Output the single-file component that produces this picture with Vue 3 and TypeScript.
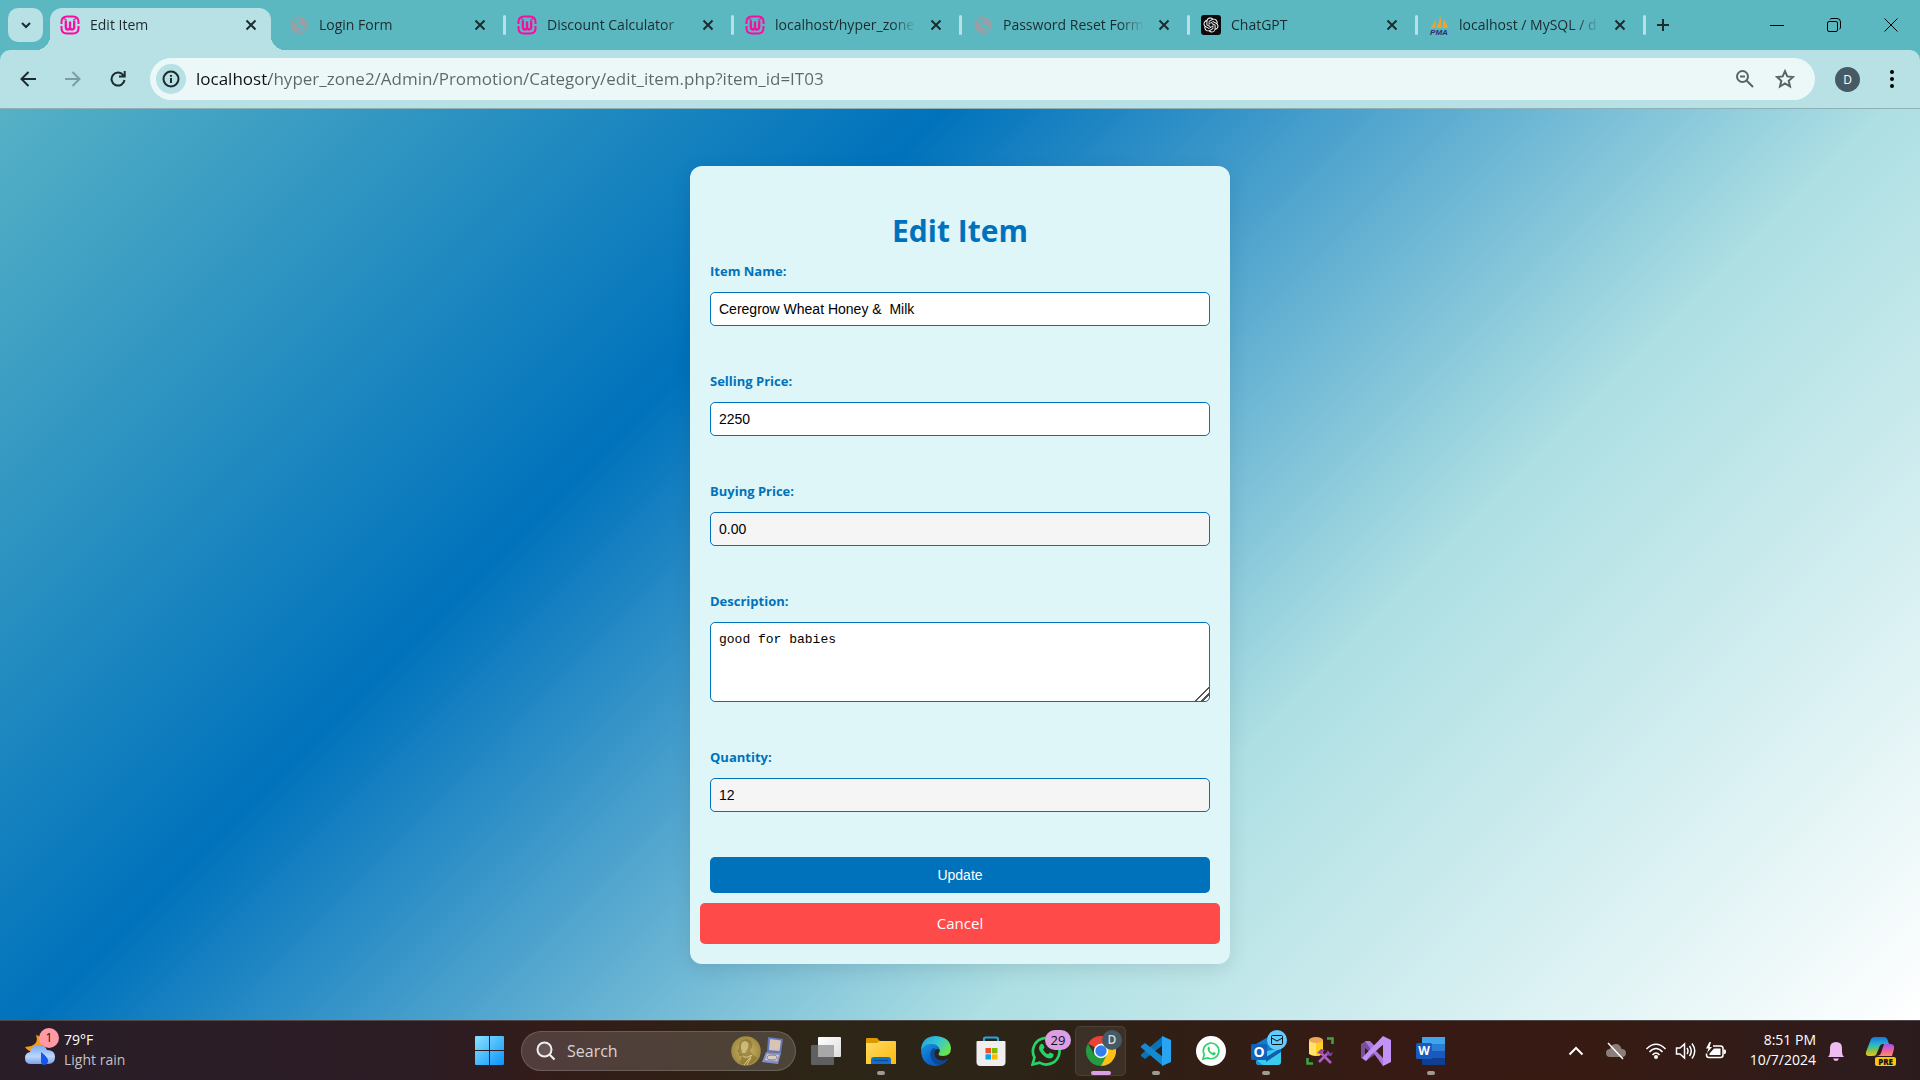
<script setup lang="ts">
import { ref } from 'vue'

interface Tab {
  title: string
  icon: 'wamp' | 'globe' | 'gpt' | 'pma'
}

interface App {
  name: string
  running?: boolean
  active?: boolean
}

const tabs: Tab[] = [
  { title: 'Edit Item', icon: 'wamp' },
  { title: 'Login Form', icon: 'globe' },
  { title: 'Discount Calculator', icon: 'wamp' },
  { title: 'localhost/hyper_zone', icon: 'wamp' },
  { title: 'Password Reset Form', icon: 'globe' },
  { title: 'ChatGPT', icon: 'gpt' },
  { title: 'localhost / MySQL / d', icon: 'pma' },
]

const apps: App[] = [
  { name: 'Task View' },
  { name: 'File Explorer', running: true },
  { name: 'Edge' },
  { name: 'Store' },
  { name: 'WhatsApp' },
  { name: 'Chrome', active: true },
  { name: 'VS Code', running: true },
  { name: 'WhatsApp Web' },
  { name: 'Outlook', running: true },
  { name: 'Database Tools' },
  { name: 'Visual Studio' },
  { name: 'Word', running: true },
]

const url = ref('localhost/hyper_zone2/Admin/Promotion/Category/edit_item.php?item_id=IT03')
const search = ref('')
const item = ref({
  name: 'Ceregrow Wheat Honey &  Milk',
  selling: '2250',
  buying: '0.00',
  description: 'good for babies',
  quantity: '12',
})
</script>

<template>
  <div class="desktop">
    <header class="chrome">
      <div class="strip">
        <button class="tab-search" aria-label="Search tabs">
          <svg width="12" height="12" viewBox="0 0 12 12"><path d="M2 4l4 4 4-4" class="stroke2" /></svg>
        </button>
        <div class="tabs">
          <div v-for="(tab, i) in tabs" :key="i" class="tab" :class="{ active: i === 0 }">
            <svg v-if="tab.icon === 'wamp'" class="fav" viewBox="0 0 20 20">
              <g fill="none" stroke="#f90da0" stroke-width="2">
                <path d="M1.500 9V7Q1.500 1.500 7 1.500H13Q18.500 1.500 18.500 7V9M1.500 11V13Q1.500 18.500 7 18.500H13Q18.500 18.500 18.500 13V11" />
                <path d="M5.800 5.500V12Q5.800 14.500 7.900 14.500T10 12V6.500V12Q10 14.500 12.100 14.500T14.200 12V5.500" stroke-width="2.300" />
                <path d="M4 3.500L6.500 5M16 3.500L13.500 5" stroke-width="1.200" />
              </g>
            </svg>
            <svg v-else-if="tab.icon === 'globe'" class="fav" viewBox="0 0 20 20">
              <circle cx="10" cy="10" r="7.600" fill="none" stroke="#989fa6" stroke-width="2" />
              <path d="M2.500 8H6L9 10.500V12.500H11.500V15L9 18 4 16 2 11ZM10 2.500L15 4 17.500 8.500V11.500H14.500L12.500 9.500H10.500L9 7.500 11 5Z" fill="#989fa6" />
            </svg>
            <svg v-else-if="tab.icon === 'gpt'" class="fav" viewBox="0 0 20 20">
              <rect width="20" height="20" rx="3" fill="#0b0b0b" />
              <path transform="translate(2.500 2.500) scale(.625)" fill="#fff" d="M22.2819 9.8211a5.9847 5.9847 0 0 0-.5157-4.9108 6.0462 6.0462 0 0 0-6.5098-2.9A6.0651 6.0651 0 0 0 4.9807 4.1818a5.9847 5.9847 0 0 0-3.9977 2.9 6.0462 6.0462 0 0 0 .7427 7.0966 5.98 5.98 0 0 0 .511 4.9107 6.051 6.051 0 0 0 6.5146 2.9001A5.9847 5.9847 0 0 0 13.2599 24a6.0557 6.0557 0 0 0 5.7718-4.2058 5.9894 5.9894 0 0 0 3.9977-2.9001 6.0557 6.0557 0 0 0-.7475-7.0729zm-9.022 12.6081a4.4755 4.4755 0 0 1-2.8764-1.0408l.1419-.0804 4.7783-2.7582a.7948.7948 0 0 0 .3927-.6813v-6.7369l2.02 1.1686a.071.071 0 0 1 .038.052v5.5826a4.504 4.504 0 0 1-4.4945 4.4944zm-9.6607-4.1254a4.4708 4.4708 0 0 1-.5346-3.0137l.142.0852 4.783 2.7582a.7712.7712 0 0 0 .7806 0l5.8428-3.3685v2.3324a.0804.0804 0 0 1-.0332.0615L9.74 19.9502a4.4992 4.4992 0 0 1-6.1408-1.6464zM2.3408 7.8956a4.485 4.485 0 0 1 2.3655-1.9728V11.6a.7664.7664 0 0 0 .3879.6765l5.8144 3.3543-2.0201 1.1685a.0757.0757 0 0 1-.071 0l-4.8303-2.7865A4.504 4.504 0 0 1 2.3408 7.872zm16.5963 3.8558L13.1038 8.364 15.1192 7.2a.0757.0757 0 0 1 .071 0l4.8303 2.7913a4.4944 4.4944 0 0 1-.6765 8.1042v-5.6772a.79.79 0 0 0-.407-.667zm2.0107-3.0231l-.142-.0852-4.7735-2.7818a.7759.7759 0 0 0-.7854 0L9.409 9.2297V6.8974a.0662.0662 0 0 1 .0284-.0615l4.8303-2.7866a4.4992 4.4992 0 0 1 6.6802 4.66zM8.3065 12.863l-2.02-1.1638a.0804.0804 0 0 1-.038-.0567V6.0742a4.4992 4.4992 0 0 1 7.3757-3.4537l-.142.0805L8.704 5.459a.7948.7948 0 0 0-.3927.6813zm1.0976-2.3654l2.602-1.4998 2.6069 1.4998v2.9994l-2.5974 1.4997-2.6067-1.4997Z" />
            </svg>
            <svg v-else class="fav" viewBox="0 0 20 20">
              <path d="M1.500 13Q5 9 6.500 4Q7 9 6.500 13ZM7.500 13Q10.500 7 11 0Q13 7 12.500 13ZM13.500 13Q14.500 9 14.500 4Q18 8 19 13Z" fill="#f5a02a" />
              <text x="10" y="19.500" class="pma" text-anchor="middle">PMA</text>
            </svg>
            <span class="title">{{ tab.title }}</span>
            <button class="close" :aria-label="`Close ${tab.title}`">
              <svg width="12" height="12" viewBox="0 0 12 12"><path d="M1.500 1.500l9 9M10.500 1.500l-9 9" class="stroke2" /></svg>
            </button>
          </div>
          <button class="new-tab" aria-label="New tab">
            <svg width="14" height="14" viewBox="0 0 14 14"><path d="M7 1v12M1 7h12" class="stroke2" /></svg>
          </button>
        </div>
        <div class="window-controls">
          <button aria-label="Minimize"><svg width="14" height="14" viewBox="0 0 14 14"><path d="M0 7.500h14" class="stroke1" /></svg></button>
          <button aria-label="Restore">
            <svg width="14" height="14" viewBox="0 0 14 14"><rect x=".5" y="3.500" width="10" height="10" rx="1.500" class="stroke1" /><path d="M3 1.500Q3 .5 5 .5H10Q13.500 .5 13.500 4V9Q13.500 11 12.500 11" class="stroke1" /></svg>
          </button>
          <button aria-label="Close window"><svg width="14" height="14" viewBox="0 0 14 14"><path d="M.5 .5l13 13M13.500 .5l-13 13" class="stroke1" /></svg></button>
        </div>
      </div>

      <nav class="toolbar">
        <button class="nav" aria-label="Back"><svg width="16" height="16" viewBox="0 0 16 16"><path d="M16 8H2M8.500 1L1.500 8l7 7" class="stroke2" /></svg></button>
        <button class="nav dim" aria-label="Forward"><svg width="16" height="16" viewBox="0 0 16 16"><path d="M0 8h14M7.500 1l7 7-7 7" class="stroke2" /></svg></button>
        <button class="nav" aria-label="Reload">
          <svg width="16" height="16" viewBox="0 0 16 16"><path d="M13.500 4.500A6.500 6.500 0 1 0 14.500 9M14.700 0V5.500H9" class="stroke2" /></svg>
        </button>
        <div class="omnibox">
          <button class="site-info" aria-label="View site information">
            <svg width="18" height="18" viewBox="0 0 18 18"><circle cx="9" cy="9" r="7.500" class="stroke2" /><path d="M9 8v5M9 5v1.800" class="stroke2" /></svg>
          </button>
          <input v-model="url" class="url" aria-label="Address" spellcheck="false" />
          <button class="page-action" aria-label="Zoom">
            <svg width="20" height="20" viewBox="0 0 20 20"><circle cx="7.500" cy="7.500" r="5.500" class="stroke2" /><path d="M11.500 11.500L18 18M5 7.500h5" class="stroke2" /></svg>
          </button>
          <button class="page-action" aria-label="Bookmark this tab">
            <svg width="20" height="20" viewBox="0 0 20 20"><path d="M10 2.200L12.300 7.400 18 8 13.700 11.800 15 17.500 10 14.500 5 17.500 6.300 11.800 2 8 7.700 7.400Z" class="stroke2" /></svg>
          </button>
        </div>
        <button class="avatar" aria-label="Profile">D</button>
        <button class="menu" aria-label="Menu">
          <svg width="6" height="20" viewBox="0 0 6 20"><circle cx="3" cy="3" r="2" /><circle cx="3" cy="10" r="2" /><circle cx="3" cy="17" r="2" /></svg>
        </button>
      </nav>
    </header>

    <main class="page">
      <section class="card">
        <form @submit.prevent>
          <h1>Edit Item</h1>
          <div class="field">
            <label for="name">Item Name:</label>
            <input id="name" v-model="item.name" type="text" />
          </div>
          <div class="field">
            <label for="selling">Selling Price:</label>
            <input id="selling" v-model="item.selling" type="text" />
          </div>
          <div class="field">
            <label for="buying">Buying Price:</label>
            <input id="buying" v-model="item.buying" type="text" readonly />
          </div>
          <div class="field">
            <label for="description">Description:</label>
            <textarea id="description" v-model="item.description" spellcheck="false"></textarea>
          </div>
          <div class="field">
            <label for="quantity">Quantity:</label>
            <input id="quantity" v-model="item.quantity" type="text" readonly />
          </div>
          <button type="submit" class="update">Update</button>
        </form>
        <a href="#" class="cancel">Cancel</a>
      </section>
    </main>

    <footer class="taskbar">
      <button class="weather">
        <span class="weather-icon">
          <svg width="32" height="38" viewBox="0 0 32 38">
            <defs><linearGradient id="cloud" x1="0" y1="0" x2="0" y2="1"><stop offset="0" stop-color="#78a7f5" /><stop offset=".6" stop-color="#bcd6fb" /><stop offset="1" stop-color="#7aa3ec" /></linearGradient></defs>
            <path d="M12 7Q16 18 1 19Q5 25 13 23Q20 20 19 13Q17 8 12 7Z" fill="#f39a1e" />
            <path d="M7 36Q1 36 1 30Q1 25 6 24Q8 17 15 17Q21 17 23 22Q31 22 31 29Q31 36 24 36Z" fill="url(#cloud)" />
            <path d="M17 24Q25 30 24 34Q23 37 20 37Q17 37 17 33Z" fill="#1557ed" />
          </svg>
          <span class="badge">1</span>
        </span>
        <span class="weather-text"><span class="temp">79°F</span><span class="cond">Light rain</span></span>
      </button>

      <div class="center">
        <button class="cell" aria-label="Start">
          <svg width="29" height="29" viewBox="0 0 29 29">
            <defs><linearGradient id="win" x1="0" y1="0" x2="1" y2="1"><stop offset="0" stop-color="#8be2ff" /><stop offset="1" stop-color="#0a94fb" /></linearGradient></defs>
            <path d="M0 1Q0 0 1 0H14V14H0ZM15 0H28Q29 0 29 1V14H15ZM0 15H14V29H1Q0 29 0 28ZM15 15H29V28Q29 29 28 29H15Z" fill="url(#win)" />
          </svg>
        </button>
        <label class="search">
          <svg width="20" height="20" viewBox="0 0 20 20"><circle cx="8.500" cy="8.500" r="7" fill="#ffffff20" stroke="#eee" stroke-width="2" /><path d="M13.500 13.500L18.500 18.500" stroke="#eee" stroke-width="2.200" /></svg>
          <input v-model="search" placeholder="Search" aria-label="Search" />
          <svg width="52" height="30" viewBox="0 0 52 30">
            <defs><radialGradient id="coin"><stop offset="0" stop-color="#cdb76a" /><stop offset="1" stop-color="#a08a40" /></radialGradient></defs>
            <circle cx="15" cy="15" r="14.800" fill="url(#coin)" />
            <path d="M9 27L11 20 8 20 8 17 6 15 8 12Q7 4 15 3Q22 3 21 11L19 15 22 19 26 22Q21 29 15 29Z" fill="#6d5b22" opacity=".4" />
            <path d="M10 12Q9 6 14 5Q19 6 17 12L14 17 11 17Z" fill="#e0cf8d" opacity=".7" />
            <path d="M12 20Q16 23 20 19M13 29L21 19M20 22Q17 26 16 29" stroke="#ddcb83" fill="none" />
            <path d="M37 1L52 3 50 17 36 16Z" fill="#6577b8" /><path d="M39 3L50 4.500 48.500 15 38 14Z" fill="#d8c3b8" />
            <path d="M35 16L50 17 47 28 31 26Z" fill="#8190ca" /><path d="M36 18L48 19 46 25 34 24Z" fill="#d9cdc9" /><ellipse cx="41" cy="21.500" rx="5" ry="2.500" fill="none" stroke="#81747b" />
          </svg>
        </label>
        <button v-for="app in apps" :key="app.name" class="cell" :class="{ running: app.running, current: app.active }" :aria-label="app.name">
          <svg v-if="app.name === 'Task View'" class="ico" viewBox="0 0 30 30">
            <defs><linearGradient id="tv" x1="0" y1="0" x2="1" y2="1"><stop offset="0" stop-color="#fff" /><stop offset="1" stop-color="#dedede" /></linearGradient></defs>
            <rect x="7" y="1" width="23" height="20" rx="1" fill="url(#tv)" /><rect y="9" width="23" height="20" rx="1" fill="#5f5f60" /><rect x="7" y="9" width="16" height="12" fill="#a8a8a8" />
          </svg>
          <svg v-else-if="app.name === 'File Explorer'" class="ico" viewBox="0 0 30 30">
            <defs><linearGradient id="fe" x1="0" y1="0" x2="1" y2="1"><stop offset="0" stop-color="#ffdc64" /><stop offset="1" stop-color="#fdb90c" /></linearGradient></defs>
            <path d="M0 3Q0 2 1 2H11L14 5H28V12H0Z" fill="#dc9a00" /><path d="M0 7H11L14 5H29Q30 5 30 6V28H0Z" fill="url(#fe)" />
            <path d="M5 28V24Q5 21 8 21H22Q25 21 25 24V28Z" fill="#0f70cc" /><path d="M8 24.500H22" stroke="#074c91" stroke-width="1.200" />
          </svg>
          <svg v-else-if="app.name === 'Edge'" class="ico" viewBox="0 0 30 30">
            <defs>
              <linearGradient id="e1" x1="0" y1="0" x2="1" y2=".6"><stop offset="0" stop-color="#1f9fe0" /><stop offset=".55" stop-color="#35c6d6" /><stop offset="1" stop-color="#6ae34c" /></linearGradient>
              <linearGradient id="e2" x1="0" y1="0" x2="1" y2="1"><stop offset="0" stop-color="#1b97e0" /><stop offset=".5" stop-color="#0c68c9" /><stop offset="1" stop-color="#0d51a5" /></linearGradient>
            </defs>
            <path d="M0 14Q1 0 15 0Q29 1 30 12Q30 20 22 20Q16 20 18 17Q20 14 17 11Q10 6 0 14Z" fill="url(#e1)" />
            <path d="M0 15Q3 7 11 8Q17 8 18 13Q12 13 12 18Q13 25 22 25L27 23Q22 30 14 30Q1 29 0 15Z" fill="url(#e2)" />
            <path d="M12 12Q8 16 10 22Q12 28 18 29Q24 28 27 23Q20 27 15 22Q12 18 15 13Z" fill="#0b4997" />
          </svg>
          <svg v-else-if="app.name === 'Store'" class="ico" viewBox="0 0 30 30">
            <path d="M8 6V3Q8 1.500 9.500 1.500H20.500Q22 1.500 22 3V6" fill="none" stroke="#26a5e2" stroke-width="2.200" /><path d="M.5 6Q.5 5 1.500 5H28.500Q29.500 5 29.500 6V26Q29.500 30 25.500 30H4.500Q.5 30 .5 26Z" fill="#efefef" />
            <path d="M9.500 12H15V17.300H9.500Z" fill="#f25022" /><path d="M16 12H21.500V17.300H16Z" fill="#7fba00" /><path d="M9.500 18.300H15V23.500H9.500Z" fill="#00a4ef" /><path d="M16 18.300H21.500V23.500H16Z" fill="#ffb900" />
          </svg>
          <svg v-else-if="app.name === 'WhatsApp'" class="ico" viewBox="0 0 30 30">
            <path d="M1.500 28.500L3.500 21.500A13.300 13.300 0 1 1 8.500 26.700Z" fill="none" stroke="#25d366" stroke-width="2.700" />
            <path d="M10 8Q11.500 7 12.500 9L13.500 11.500 12 13.700Q14 17 17 18.300L19 16.500 22.500 18Q23 22 19 22.500Q15 22.500 11 18T8.300 10.500Q8.500 9 10 8Z" fill="#25d366" />
          </svg>
          <svg v-else-if="app.name === 'Chrome'" class="ico" viewBox="0 0 30 30">
            <path d="M15 15L2 7.500A15 15 0 0 1 28 7.500Z" fill="#ea4335" /><path d="M15 15L15 7.500H28A15 15 0 0 1 15 30Z" fill="#fbc116" /><path d="M15 30A15 15 0 0 1 2 7.500L8.500 18.700 15 22 21 18.500Z" fill="#249a41" />
            <circle cx="15" cy="15" r="7.200" fill="#fff" /><circle cx="15" cy="15" r="5.700" fill="#347df0" />
          </svg>
          <svg v-else-if="app.name === 'VS Code'" class="ico" viewBox="0 0 30 30">
            <path d="M22 0V9L4 23 0 20V18.500Z" fill="#0873b8" /><path d="M22 30V21L4 7 0 10V11.500Z" fill="#1688cf" /><path d="M21 0L30 4V26L21 30Z" fill="#27a5f2" />
          </svg>
          <svg v-else-if="app.name === 'WhatsApp Web'" class="ico" viewBox="0 0 30 30">
            <circle cx="15" cy="15" r="15" fill="#fff" /><path d="M7 23L8.200 18.500A7.800 7.800 0 1 1 11.500 21.800Z" fill="none" stroke="#25d366" stroke-width="1.600" />
            <path d="M12 11L13.200 10.700 14.200 13 13.400 14Q14.500 16.200 16.500 17L17.700 16 19.800 17Q19.500 19.500 17.300 19.300Q14.500 18.500 12.300 15.500Q10.800 12.500 12 11Z" fill="#25d366" />
          </svg>
          <svg v-else-if="app.name === 'Outlook'" class="ico" viewBox="0 0 30 30">
            <path d="M5 8L17 1 30 9V16H5Z" fill="#197bc7" /><path d="M12 16L30 12V26Q30 29 27 29H8Q5 29 5 26Z" fill="#38cbee" /><path d="M15 21L30 12V16L15 26Z" fill="#125ea9" /><path d="M5 24L12 29H8Q5 29 5 26Z" fill="#1a93dc" />
            <rect y="8" width="16" height="16" rx="1.500" fill="#0d63bd" /><text x="8" y="21" class="letter" text-anchor="middle">O</text>
          </svg>
          <svg v-else-if="app.name === 'Database Tools'" class="ico" viewBox="0 0 30 30">
            <path d="M3 4V18Q9 22 17 18V4Z" fill="#ffe36c" /><path d="M10 4V20Q14 20 17 18V4Z" fill="#ffce1e" /><ellipse cx="10" cy="4" rx="7" ry="3" fill="#f1a757" />
            <path d="M21 2.500H26.500V8M1.500 22V27.500H7" fill="none" stroke="#41a23f" stroke-width="2.600" />
            <path d="M13 26L23 16M14 16L25 27" stroke="#ad5bcf" stroke-width="2.600" fill="none" /><path d="M11 17L15 13 19 14 15 18ZM21 14L23 18 27 16 25 20 21 19Z" fill="#8d43ae" />
          </svg>
          <svg v-else-if="app.name === 'Visual Studio'" class="ico" viewBox="0 0 30 30">
            <path d="M0 8L5 5 18 16 9 22 5 25 0 22ZM4 12V19L8 15.500Z" fill="#765099" fill-rule="evenodd" /><path d="M4 5L9 5 28 25 22 30Z" fill="#ad76dc" /><path d="M22 0L30 4V26L22 30V9L10 19 5 25 1 22Z" fill="#c392f6" /><path d="M22 9L15 15 22 22Z" fill="#382019" />
          </svg>
          <svg v-else class="ico" viewBox="0 0 30 30">
            <path d="M6 1H29V8H6Z" fill="#41a5ee" /><path d="M6 8H29V15H6Z" fill="#2b7cd3" /><path d="M6 15H29V22H6Z" fill="#185abd" /><path d="M6 22H29V29H7Q6 29 6 28Z" fill="#103f91" />
            <rect y="7" width="16" height="16" rx="1.500" fill="#185abd" /><text x="8" y="19" class="letter small" text-anchor="middle">W</text>
          </svg>
          <span v-if="app.name === 'WhatsApp'" class="badge count">29</span>
          <span v-if="app.name === 'Chrome'" class="badge profile">D</span>
          <span v-if="app.name === 'Outlook'" class="badge mail"><svg width="12" height="10" viewBox="0 0 12 10"><rect x=".5" y=".5" width="11" height="9" rx="1" fill="none" stroke="#111" /><path d="M.5 3L6 6 11.500 3" fill="none" stroke="#111" /></svg></span>
        </button>
      </div>

      <div class="tray">
        <button class="tray-btn wide" aria-label="Show hidden icons"><svg width="16" height="10" viewBox="0 0 16 10"><path d="M1.500 8.500L8 2l6.500 6.500" fill="none" stroke="#fff" stroke-width="2" /></svg></button>
        <button class="tray-btn wide" aria-label="OneDrive"><svg width="22" height="18" viewBox="0 0 22 18"><path d="M5 15Q1 15 1 11T5 7Q6 2 11 2Q15 2 16.500 7Q21 7 21 11T17 15Z" fill="#8a7d7a" /><path d="M3 1L18 17" stroke="#fff" stroke-width="1.500" /></svg></button>
        <button class="tray-btn" aria-label="Network">
          <svg width="22" height="18" viewBox="0 0 22 18"><g fill="none" stroke="#fff" stroke-width="1.500"><path d="M1.500 7Q11-2.500 20.500 7" /><path d="M4.500 10Q11 3 17.500 10" /><path d="M7.500 13Q11 9 14.500 13" /></g><circle cx="11" cy="15" r="2" fill="#fff" /></svg>
        </button>
        <button class="tray-btn" aria-label="Volume">
          <svg width="22" height="18" viewBox="0 0 22 18"><g fill="none" stroke="#fff" stroke-width="1.500"><path d="M1.500 6H5L9.500 2V16L5 12H1.500Z" /><path d="M12 6Q14 9 12 12M14.500 4Q18 9 14.500 14M17 1.500Q22.500 9 17 16.500" /></g></svg>
        </button>
        <button class="tray-btn" aria-label="Battery">
          <svg width="22" height="18" viewBox="0 0 22 18"><path d="M8 4H15.500Q18 4 18 6.500V13Q18 15.500 15.500 15.500H4Q1.500 15.500 1.500 13V11.500" fill="none" stroke="#fff" stroke-width="1.500" /><path d="M18.500 7.500H20Q21 7.500 21 9.500T20 12H18.500ZM9 6.500H15.500V13H4.500V11.500ZM4.500 0L1 6.500H3.500L2 11 7 5H4.500L6 0Z" fill="#fff" /></svg>
        </button>
        <button class="clock"><span>8:51 PM</span><span>10/7/2024</span></button>
        <button class="bell" aria-label="Notifications"><svg width="18" height="20" viewBox="0 0 18 20"><path d="M1 16Q3 14 3 11V7Q3 1 9 1T15 7V11Q15 14 17 16ZM6 17.500H12Q11 20 9 20T6 17.500Z" fill="#efbcf2" /></svg></button>
        <button class="copilot" aria-label="Copilot">
          <svg width="30" height="30" viewBox="0 0 30 30">
            <defs>
              <linearGradient id="c1" x1="0" y1="0" x2="0" y2="1"><stop offset="0" stop-color="#1676dd" /><stop offset=".4" stop-color="#28b5ce" /><stop offset=".7" stop-color="#7fc54a" /><stop offset="1" stop-color="#f0c020" /></linearGradient>
              <linearGradient id="c2" x1="0" y1="0" x2="0" y2="1"><stop offset="0" stop-color="#9d55ec" /><stop offset=".6" stop-color="#f4629c" /><stop offset="1" stop-color="#f79460" /></linearGradient>
            </defs>
            <path d="M6 3Q7 1 10 1H19Q22 1 23 5L24 8H18Q15 8 14 12L11 19Q10 20 7 20H4Q0 20 1 16Z" fill="url(#c1)" /><path d="M19 8H25Q30 8 29 13L27 20H11Q15 20 16 17Z" fill="url(#c2)" />
          </svg>
          <span class="pre">PRE</span>
        </button>
      </div>
    </footer>
  </div>
</template>

<style>
body {
  margin: 0;
}
</style>

<style scoped>
.desktop {
  display: flex;
  flex-direction: column;
  min-height: 100vh;
  font-family: "Open Sans", "Noto Sans", sans-serif;
  color: #1c2b2e;
}
.desktop *,
.desktop *::before,
.desktop *::after {
  box-sizing: border-box;
}
button {
  display: flex;
  align-items: center;
  justify-content: center;
  flex: none;
  margin: 0;
  padding: 0;
  border: 0;
  background: none;
  color: inherit;
  font-family: inherit;
}
svg {
  display: block;
  flex: none;
}
.stroke1,
.stroke2 {
  fill: none;
  stroke: currentColor;
  stroke-width: 1;
}
.stroke2 {
  stroke-width: 2;
}

/* Browser frame */
.chrome {
  background: #5bb8c1;
}
.strip {
  display: flex;
  height: 50px;
  padding-left: 8px;
}
.tab-search {
  width: 35px;
  height: 34px;
  margin: 8px 7px 0 0;
  border-radius: 10px;
  background: #b7e1e4;
}
.tabs {
  display: flex;
  flex: 1;
  min-width: 0;
  gap: 7px;
}
.tab {
  position: relative;
  display: flex;
  align-items: center;
  flex: 0 1 221px;
  min-width: 0;
  height: 42px;
  margin-top: 8px;
  padding: 0 8px 8px 10px;
}
.tab:not(.active) {
  padding: 0 7px 8px 11px;
}
.tab:not(.active)::after {
  content: "";
  position: absolute;
  right: -7px;
  top: 7px;
  width: 3px;
  height: 20px;
  border-radius: 2px;
  background: #b7e1e4;
}
.tab.active {
  border-radius: 12px 12px 0 0;
  background: #b7e1e4;
}
.tab.active::before,
.tab.active::after {
  content: "";
  position: absolute;
  bottom: 0;
  width: 14px;
  height: 14px;
}
.tab.active::before {
  left: -14px;
  background: radial-gradient(circle at 0 0, transparent 14px, #b7e1e4 14px);
}
.tab.active::after {
  right: -14px;
  background: radial-gradient(circle at 100% 0, transparent 14px, #b7e1e4 14px);
}
.fav {
  width: 20px;
  height: 20px;
}
.pma {
  font: italic bold 8px "Liberation Sans", sans-serif;
  fill: #2b2f6b;
}
.title {
  flex: 1;
  min-width: 0;
  margin: 0 8px 0 10px;
  overflow: hidden;
  white-space: nowrap;
  font-size: 14px;
  line-height: 20px;
  mask-image: linear-gradient(to left, transparent, #000 24px);
}
.close {
  width: 24px;
  height: 24px;
}
.new-tab {
  width: 34px;
  height: 34px;
  margin-top: 8px;
}
.window-controls {
  display: flex;
  padding-right: 1px;
  color: #000;
}
.window-controls button {
  width: 57px;
}
.toolbar {
  display: flex;
  align-items: center;
  height: 59px;
  padding: 0 16px 0 10px;
  border-bottom: 1px solid #8fb1b6;
  border-radius: 10px 10px 0 0;
  background: #b7e1e4;
}
.nav {
  width: 35px;
  height: 35px;
  margin-right: 10px;
}
.dim {
  color: #7d9ea1;
}
.omnibox {
  display: flex;
  align-items: center;
  flex: 1;
  min-width: 0;
  height: 42px;
  margin-left: 5px;
  padding: 0 10px 0 6px;
  border-radius: 21px;
  background: #ecf8f8;
}
.site-info {
  width: 30px;
  height: 30px;
  border-radius: 50%;
  background: #b7e1e4;
}
.url {
  flex: 1;
  min-width: 0;
  margin-left: 10px;
  padding: 0;
  border: 0;
  outline: 0;
  font: 17px/24px "Open Sans", "Noto Sans", sans-serif;
  color: #5e6668;
  background: linear-gradient(to right, #111 73px, #5e6668 73px);
  background-clip: text;
  -webkit-text-fill-color: transparent;
}
.page-action {
  width: 40px;
  height: 40px;
  color: #5a6264;
}
.avatar {
  width: 25px;
  height: 25px;
  margin-left: 20px;
  border-radius: 50%;
  background: #455a64;
  color: #fff;
  font-size: 12px;
}
.menu {
  width: 24px;
  height: 34px;
  margin-left: 20px;
}

/* Web page */
.page {
  flex: 1;
  display: flex;
  align-items: flex-start;
  justify-content: center;
  padding: 57px 20px 56px;
  background: linear-gradient(135deg, #56b1c6, #0072bc, #addfe3, #fff);
}
.card {
  width: 100%;
  max-width: 540px;
  padding: 20px 10px;
  border-radius: 12px;
  background: #dff6f8;
  box-shadow: 0 5px 20px rgba(0, 0, 0, 0.1);
}
form {
  display: flex;
  flex-direction: column;
  padding: 25px 10px 0;
}
h1 {
  margin: 0 0 10px;
  color: #0072bc;
  font-size: 30px;
  line-height: 40px;
  text-align: center;
}
.field {
  display: flex;
  flex-direction: column;
  gap: 11px;
  margin-bottom: 45px;
}
.field label {
  color: #0072bc;
  font-size: 13px;
  font-weight: 700;
  line-height: 20px;
}
.field input,
.field textarea {
  width: 100%;
  height: 34px;
  margin: 0;
  padding: 8px;
  border: 1px solid #0072bc;
  border-radius: 5px;
  outline: 0;
  background: #fff;
  color: #000;
  font: 14px/16px "Liberation Sans", Arial, sans-serif;
}
.field textarea {
  height: 80px;
  font: 13px/18px "Liberation Mono", monospace;
}
.field textarea::-webkit-resizer {
  background: linear-gradient(135deg, transparent 50%, #555 50% 58%, transparent 58% 72%, #555 72% 80%, transparent 80%);
}
.field input[readonly] {
  background: #f5f5f5;
}
.update {
  height: 36px;
  border-radius: 5px;
  background: #0072bc;
  color: #fff;
  font: 14px/16px "Liberation Sans", Arial, sans-serif;
}
.cancel {
  display: block;
  margin-top: 10px;
  border-radius: 5px;
  background: #ff4a4a;
  color: #fff;
  font-size: 15px;
  line-height: 41px;
  text-align: center;
  text-decoration: none;
}

/* Taskbar */
.taskbar {
  display: grid;
  grid-template-columns: 1fr auto 1fr;
  height: 60px;
  border-top: 1px solid #4f4848;
  background: linear-gradient(to right, #291e28 0, #2c1c24 22%, #331c1a 28%, #302015 36%, #2c2617 43%, #2c2417 53%, #311e15 62%, #371a13 74%, #371b13 83%, #2c1b1e 100%);
  color: #fff;
  font-size: 14px;
}
.weather {
  justify-self: start;
  gap: 8px;
  padding-left: 24px;
}
.weather-icon {
  position: relative;
  width: 32px;
  height: 46px;
}
.badge {
  position: absolute;
  top: 0;
  right: -3px;
  display: flex;
  align-items: center;
  justify-content: center;
  height: 20px;
  min-width: 20px;
  border-radius: 10px;
  background: #ff99a4;
  color: #111;
  font-size: 12px;
}
.weather-text,
.clock {
  display: flex;
  flex-direction: column;
  padding-bottom: 2px;
  font-size: 14px;
  line-height: 20px;
}
.weather-text {
  text-align: left;
}
.cond {
  color: #c6c0c4;
}
.center {
  display: flex;
  align-items: center;
}
.cell {
  position: relative;
  width: 55px;
  height: 50px;
}
.ico {
  position: relative;
  width: 30px;
  height: 30px;
}
.letter {
  font: bold 14px "Open Sans", sans-serif;
  fill: #fff;
}
.letter.small {
  font-size: 12px;
}
.cell.running::after,
.cell.current::after {
  content: "";
  position: absolute;
  bottom: 1px;
  width: 8px;
  height: 4px;
  border-radius: 2px;
  background: #a09a95;
}
.cell.current::after {
  width: 20px;
  background: #dc9fe6;
}
.cell.current::before {
  content: "";
  position: absolute;
  inset: 0 2px;
  border: 1px solid #ffffff14;
  border-radius: 5px;
  background: #ffffff12;
}
.cell .badge {
  top: 4px;
  right: 6px;
}
.cell .count {
  width: 26px;
  right: 2px;
  background: #dc9fe6;
  font-size: 13px;
}
.cell .profile {
  background: #455a64;
  color: #d5dde0;
  font-weight: 600;
}
.cell .mail {
  background: #60cdff;
}
.search {
  display: flex;
  align-items: center;
  width: 275px;
  height: 40px;
  margin: 0 2px 0 4px;
  padding: 0 12px 0 14px;
  border: 1px solid #ffffff28;
  border-radius: 20px;
  background: #ffffff26;
}
.search input {
  flex: 1;
  min-width: 0;
  margin: 0 0 0 11px;
  padding: 0;
  border: 0;
  outline: 0;
  background: none;
  color: #fff;
  font: 16px/24px "Open Sans", "Noto Sans", sans-serif;
}
.search input::placeholder {
  color: #d8d4d2;
  opacity: 1;
}
.tray {
  display: flex;
  align-items: center;
  justify-content: flex-end;
  padding-right: 25px;
}
.tray-btn {
  width: 30px;
  height: 40px;
}
.tray-btn.wide {
  width: 40px;
}
.tray-btn.wide + .tray-btn:not(.wide) {
  margin-left: 5px;
}
.clock {
  align-items: flex-end;
  width: 85px;
}
.bell {
  width: 18px;
  margin-left: 11px;
}
.copilot {
  position: relative;
  width: 30px;
  height: 40px;
  margin-left: 20px;
}
.pre {
  position: absolute;
  right: -1px;
  bottom: 5px;
  padding: 0 3px;
  border-radius: 2px;
  background: #fcc50a;
  color: #111;
  font-size: 8px;
  font-weight: 800;
  line-height: 9px;
}
</style>
